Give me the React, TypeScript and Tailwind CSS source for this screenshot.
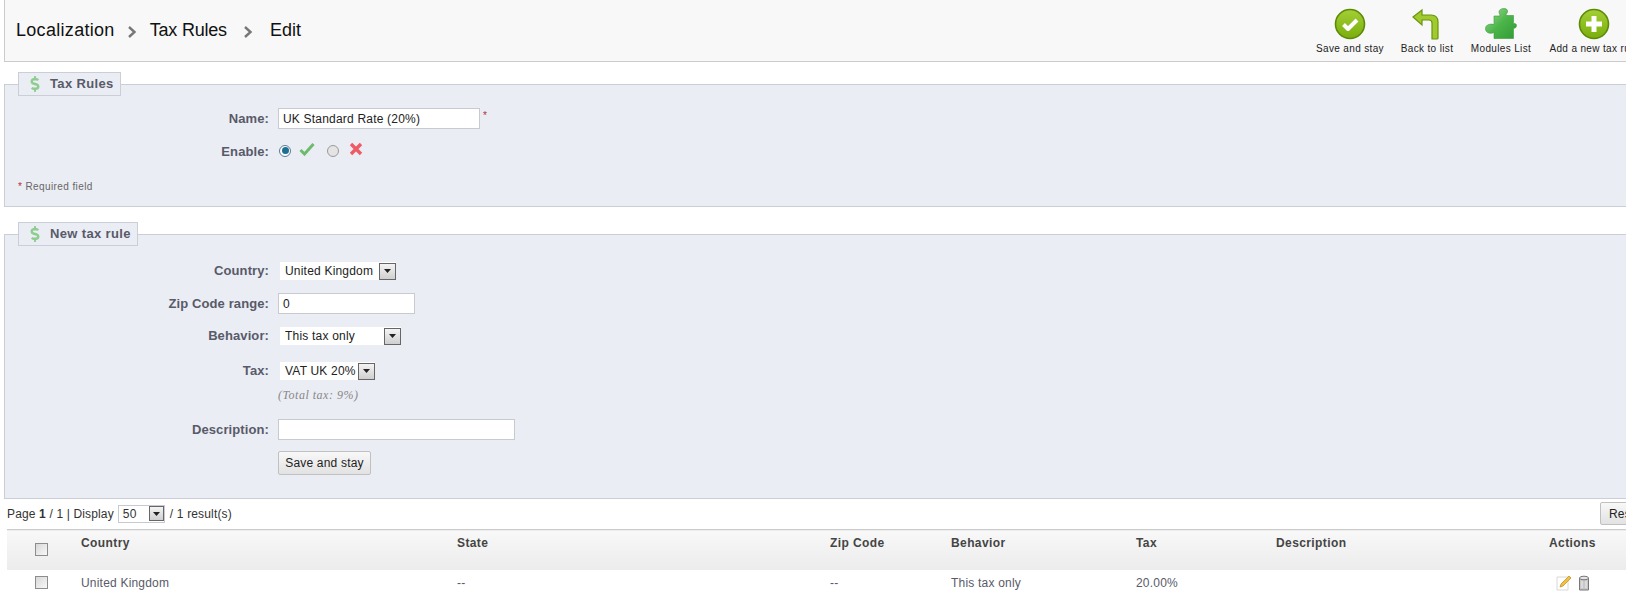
import { ReactNode } from 'react'
import { FaDollarSign } from 'react-icons/fa'

const columns = [
  { label: 'Country', width: 'w-[376px]', value: 'United Kingdom' },
  { label: 'State', width: 'w-[373px]', value: '--' },
  { label: 'Zip Code', width: 'w-[121px]', value: '--' },
  { label: 'Behavior', width: 'w-[185px]', value: 'This tax only' },
  { label: 'Tax', width: 'w-[140px]', value: '20.00%' },
  { label: 'Description', width: 'w-[273px]', value: '' },
]

function Crumb({ className }: { className: string }) {
  return (
    <svg width="9" height="12" viewBox="0 0 9 12" className={`mt-[3px] ${className}`}>
      <path d="M1 1l5.5 5L1 11" fill="none" stroke="#777" strokeWidth="2.4" />
    </svg>
  )
}

function RoundIcon({ id, children }: { id: string; children: ReactNode }) {
  return (
    <svg width="32" height="32" viewBox="0 0 32 32">
      <defs>
        <linearGradient id={id} x1="0" y1="0" x2="0" y2="1">
          <stop offset="0" stopColor="#a3cf35" />
          <stop offset="1" stopColor="#7aae0c" />
        </linearGradient>
      </defs>
      <circle cx="16" cy="16" r="14.5" fill={`url(#${id})`} stroke="#5c8a08" strokeWidth="1.6" />
      {children}
    </svg>
  )
}

function ToolbarItem({ label, width, icon }: { label: string; width: string; icon: ReactNode }) {
  return (
    <div className={`flex shrink-0 flex-col items-center whitespace-nowrap ${width}`}>
      <div className="h-[32px] w-[32px]">{icon}</div>
      <span className="mt-[2px] text-[10px] leading-[14px] tracking-[0.35px] text-[#222]">{label}</span>
    </div>
  )
}

function Fieldset({ title, className, children }: { title: string; className: string; children: ReactNode }) {
  return (
    <fieldset className={`border border-r-0 border-[#ccced7] bg-[#ebedf4] ${className}`}>
      <legend className="ml-[13px] flex h-[24px] items-center border border-[#ccced7] bg-[#ebedf4] pl-[8px] pr-[6px] text-[13px] font-bold tracking-[0.35px] text-[#585a69]">
        <FaDollarSign className="mr-[7px] text-[16px] text-[#8fcc8f]" />
        {title}
      </legend>
      {children}
    </fieldset>
  )
}

function Row({ label, className, children }: { label: string; className: string; children: ReactNode }) {
  return (
    <div className={`flex items-center ${className}`}>
      <label className="w-[264px] text-right text-[13px] font-bold tracking-[0.1px] text-[#585a69]">{label}</label>
      <div className="ml-[9px] flex items-center">{children}</div>
    </div>
  )
}

function TextInput({ value, width }: { value: string; width: string }) {
  return (
    <div className={`flex h-[21px] items-center border border-[#c8cad2] bg-white pl-[4px] text-[12px] tracking-[0.2px] text-[#222] ${width}`}>
      {value}
    </div>
  )
}

function Select({ value, width }: { value: string; width: string }) {
  return (
    <div className={`ml-[2px] flex h-[18px] items-center justify-between bg-white pl-[5px] text-[12px] tracking-[0.2px] text-[#222] ${width}`}>
      <span>{value}</span>
      <span className="flex h-[17px] w-[17px] items-center justify-center border border-[#666] bg-gradient-to-b from-[#f4f4f4] to-[#cfcfcf]">
        <svg width="7" height="4" viewBox="0 0 7 4">
          <path d="M0 0h7L3.5 4z" fill="#222" />
        </svg>
      </span>
    </div>
  )
}

function Checkbox() {
  return <span className="block h-[13px] w-[13px] border border-[#8d8d8d] bg-gradient-to-br from-[#d8d8d8] to-[#f8f8f8]" />
}

export default function App() {
  return (
    <div className="h-[593px] w-[1626px] overflow-hidden bg-white font-['Liberation_Sans',Arial,sans-serif]">
      {/* Title bar */}
      <div className="ml-[4px] flex h-[62px] items-start justify-between border-b border-l border-[#ccc] bg-[#f8f8f8]">
        <div className="ml-[11px] mt-[18px] flex items-center text-[18px] leading-[24px] text-[#111]">
          <span className="tracking-[0.3px]">Localization</span>
          <Crumb className="mx-[13px]" />
          <span className="tracking-[-0.2px]">Tax Rules</span>
          <Crumb className="mx-[17px]" />
          <span>Edit</span>
        </div>
        <div className="flex h-full w-[315px] shrink-0 pt-[8px]">
          <ToolbarItem
            label="Save and stay"
            width="w-[78px]"
            icon={
              <RoundIcon id="save">
                <path d="M9.5 16.5l4.5 4.5 9-9" fill="none" stroke="#fff" strokeWidth="4" strokeLinejoin="round" />
              </RoundIcon>
            }
          />
          <ToolbarItem
            label="Back to list"
            width="w-[76px]"
            icon={
              <svg width="32" height="32" viewBox="0 0 32 32">
                <path
                  d="M2 9l9-7v5h9c5 0 7 3 7 7v16a1 1 0 0 1-1 1h-5V15c0-2-1-3-3-3h-7v5z"
                  fill="#9fcb2e"
                  stroke="#6a9410"
                  strokeWidth="1.2"
                />
              </svg>
            }
          />
          <ToolbarItem
            label="Modules List"
            width="w-[72px]"
            icon={
              <svg width="32" height="32" viewBox="0 0 32 32">
                <defs>
                  <linearGradient id="puzzle" x1="0" y1="0" x2="1" y2="1">
                    <stop offset="0" stopColor="#a5dc96" />
                    <stop offset="0.5" stopColor="#4cb54a" />
                    <stop offset="1" stopColor="#2f9a35" />
                  </linearGradient>
                </defs>
                <path
                  d="M14 4c0-2 2-3.500 5-3.500s4 2 3.500 3.500c-.5 1.500-1.500 2-1.500 3.500h7.500v7c-1 1.500 3 0 3 3s-3 3-3 2.500v10.500H9v-6c-1 .5-4 1.500-6.500 0C.5 23 0 21 1 18.500c1-2 5-3 8-2V8h6c0-2-1-2.500-1-4z"
                  fill="url(#puzzle)"
                  stroke="#3d9a3d"
                  strokeWidth="0.6"
                />
              </svg>
            }
          />
          <ToolbarItem
            label="Add a new tax rule"
            width="w-[114px]"
            icon={
              <RoundIcon id="add">
                <path d="M16 8v16M8 16h16" fill="none" stroke="#fff" strokeWidth="5" />
              </RoundIcon>
            }
          />
        </div>
      </div>

      <div className="ml-[4px] mt-[10px]">
        <Fieldset title="Tax Rules" className="h-[135px]">
          <Row label="Name:" className="mt-[12px]">
            <TextInput value="UK Standard Rate (20%)" width="w-[202px]" />
            <span className="mb-[6px] ml-[3px] text-[10px] text-[#b03030]">*</span>
          </Row>
          <Row label="Enable:" className="mt-[13px]">
            <span className="mb-[2px] ml-[1px] flex h-[12px] w-[12px] items-center justify-center rounded-full border border-[#5a7a90] bg-white">
              <span className="h-[7px] w-[7px] rounded-full bg-[#1d6f93]" />
            </span>
            <svg width="16" height="14" viewBox="0 0 16 14" className="mb-[5px] ml-[8px]">
              <path d="M1.5 8l4 4 9-10" fill="none" stroke="#6dbb6d" strokeWidth="3" />
            </svg>
            <span className="mb-[2px] ml-[12px] h-[12px] w-[12px] rounded-full border border-[#9a9a9a] bg-[#e4e4e4]" />
            <svg width="14" height="14" viewBox="0 0 14 14" className="mb-[5px] ml-[10px]">
              <path d="M2 2l10 10M12 2L2 12" fill="none" stroke="#ef5b64" strokeWidth="3.4" />
            </svg>
          </Row>
          <p className="ml-[13px] mt-[18px] text-[10px] leading-[14px] tracking-[0.4px] text-[#666]">
            <span className="text-[#b03030]">*</span> Required field
          </p>
        </Fieldset>

        <Fieldset title="New tax rule" className="mt-[15px] h-[277px]">
          <Row label="Country:" className="mt-[16px] h-[18px]">
            <Select value="United Kingdom" width="w-[116px]" />
          </Row>
          <Row label="Zip Code range:" className="mt-[13px]">
            <TextInput value="0" width="w-[137px]" />
          </Row>
          <Row label="Behavior:" className="mt-[13px] h-[18px]">
            <Select value="This tax only" width="w-[121px]" />
          </Row>
          <Row label="Tax:" className="mt-[17px] h-[18px]">
            <Select value="VAT UK 20%" width="w-[95px]" />
          </Row>
          <p className="ml-[273px] mt-[8px] font-['Liberation_Serif',serif] text-[12px] italic leading-[14px] tracking-[0.5px] text-[#888]">
            (Total tax: 9%)
          </p>
          <Row label="Description:" className="mt-[17px]">
            <TextInput value="" width="w-[237px]" />
          </Row>
          <button className="ml-[273px] mt-[11px] block h-[24px] w-[93px] rounded-[2px] border border-[#c0c0c0] bg-gradient-to-b from-[#f8f8f8] to-[#e2e2e2] text-[12px] tracking-[0.2px] text-[#222]">
            Save and stay
          </button>
        </Fieldset>
      </div>

      {/* Pagination */}
      <div className="relative mt-[5px] flex h-[19px] items-center pl-[7px] text-[12px] tracking-[0.15px] text-[#333]">
        <span>
          Page <b>1</b> / 1 | Display
        </span>
        <div className="ml-[4px] flex h-[18px] w-[47px] items-center justify-between border border-[#c8cad2] bg-white pl-[4px]">
          <span>50</span>
          <span className="flex h-[15px] w-[15px] items-center justify-center border border-[#666] bg-gradient-to-b from-[#f4f4f4] to-[#cfcfcf]">
            <svg width="7" height="4" viewBox="0 0 7 4">
              <path d="M0 0h7L3.5 4z" fill="#222" />
            </svg>
          </span>
        </div>
        <span className="ml-[5px]">/ 1 result(s)</span>
        <button className="absolute left-[1600px] top-[-2px] h-[23px] w-[60px] rounded-[2px] border border-[#c0c0c0] bg-gradient-to-b from-[#f8f8f8] to-[#e2e2e2] pl-[8px] text-left text-[12px] text-[#222]">
          Reset
        </button>
      </div>

      {/* Rules table */}
      <table className="ml-[7px] mt-[6px] w-[1640px] table-fixed border-collapse text-[12px] tracking-[0.2px] text-[#585a69]">
        <thead>
          <tr className="h-[40px] border-t border-[#ccc] bg-gradient-to-b from-[#f8f8f8] to-[#ececec]">
            <th className="w-[68px] align-top">
              <div className="ml-[28px] mt-[13px]">
                <Checkbox />
              </div>
            </th>
            {columns.map((col) => (
              <th
                key={col.label}
                className={`${col.width} pl-[6px] pt-[4px] text-left align-top font-bold tracking-[0.4px] text-[#444]`}
              >
                {col.label}
              </th>
            ))}
            <th className="pl-[6px] pt-[4px] text-left align-top font-bold tracking-[0.4px] text-[#444]">Actions</th>
          </tr>
        </thead>
        <tbody>
          <tr className="h-[26px]">
            <td>
              <div className="ml-[28px]">
                <Checkbox />
              </div>
            </td>
            {columns.map((col) => (
              <td key={col.label} className="pl-[6px]">
                {col.value}
              </td>
            ))}
            <td className="pl-[13px]">
              <div className="flex items-center gap-[6px]">
                <svg width="16" height="16" viewBox="0 0 16 16">
                  <path d="M1 2h11v13H1z" fill="#fff" stroke="#d8d8d8" />
                  <path d="M4 12l1-3 8-8 2 2-8 8z" fill="#f0c040" stroke="#c08a20" strokeWidth="0.7" />
                </svg>
                <svg width="12" height="16" viewBox="0 0 12 16">
                  <path d="M1.500 3h9v12h-9z" fill="#c8c8c8" stroke="#777" />
                  <ellipse cx="6" cy="3" rx="4.500" ry="1.800" fill="#e4e4e4" stroke="#777" />
                  <path d="M4 6v7M8 6v7" stroke="#eee" />
                </svg>
              </div>
            </td>
          </tr>
        </tbody>
      </table>
    </div>
  )
}
